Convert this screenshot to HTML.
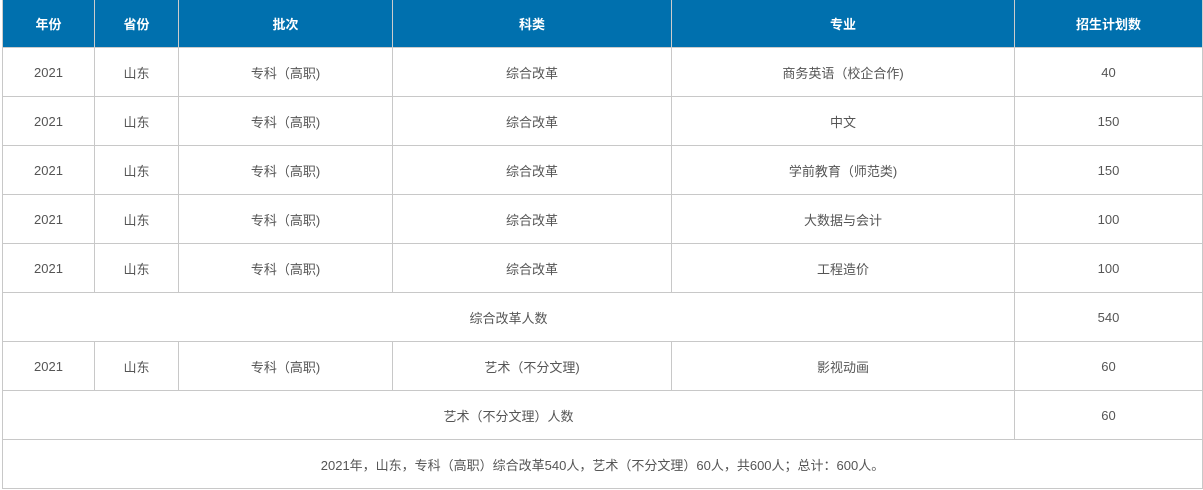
<!DOCTYPE html>
<html><head><meta charset="utf-8"><style>
body{margin:0;background:#fff;width:1203px;height:490px;overflow:hidden}
table{position:absolute;left:2px;top:0;border-collapse:collapse;width:1200px;table-layout:fixed;font-family:"Liberation Sans","Noto Sans CJK SC",sans-serif;font-size:13px;color:#555}
td,th{border:1px solid #c8c8c8;text-align:center;padding:0;height:48px}
th{background:#0070ae;color:#fff;font-weight:bold;height:47px;border-color:#ccc;border-top:none}
</style></head><body>
<table>
<colgroup><col style="width:92px"><col style="width:84px"><col style="width:214px"><col style="width:279px"><col style="width:343px"><col style="width:188px"></colgroup>
<tr><th>年份</th><th>省份</th><th>批次</th><th>科类</th><th>专业</th><th>招生计划数</th></tr>
<tr><td>2021</td><td>山东</td><td>专科（高职)</td><td>综合改革</td><td>商务英语（校企合作)</td><td>40</td></tr>
<tr><td>2021</td><td>山东</td><td>专科（高职)</td><td>综合改革</td><td>中文</td><td>150</td></tr>
<tr><td>2021</td><td>山东</td><td>专科（高职)</td><td>综合改革</td><td>学前教育（师范类)</td><td>150</td></tr>
<tr><td>2021</td><td>山东</td><td>专科（高职)</td><td>综合改革</td><td>大数据与会计</td><td>100</td></tr>
<tr><td>2021</td><td>山东</td><td>专科（高职)</td><td>综合改革</td><td>工程造价</td><td>100</td></tr>
<tr><td colspan="5">综合改革人数</td><td>540</td></tr>
<tr><td>2021</td><td>山东</td><td>专科（高职)</td><td>艺术（不分文理)</td><td>影视动画</td><td>60</td></tr>
<tr><td colspan="5">艺术（不分文理）人数</td><td>60</td></tr>
<tr><td colspan="6">2021年，山东，专科（高职）综合改革540人，艺术（不分文理）60人，共600人；总计：600人。</td></tr>
</table>
</body></html>
